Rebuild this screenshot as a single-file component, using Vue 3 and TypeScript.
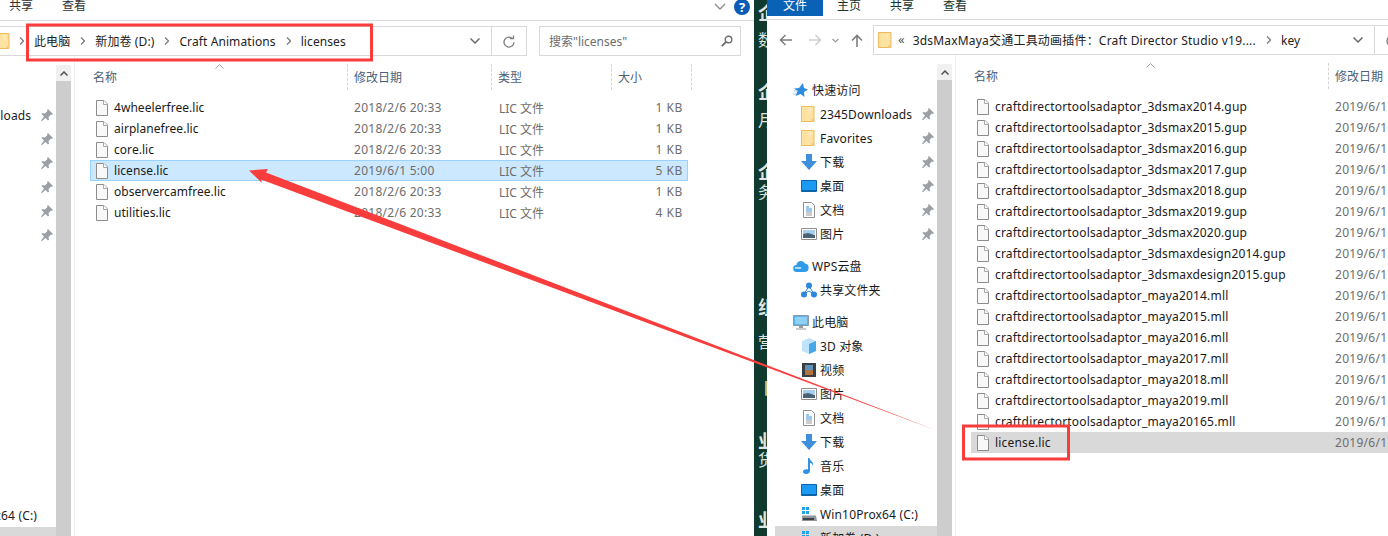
<script setup lang="ts">
type NavRow = { label: string; icon: string; level: number; pin?: boolean; active?: boolean }

const navGroups: NavRow[][] = [
  [
    { label: '快速访问', icon: 'star', level: 0 },
    { label: '2345Downloads', icon: 'folder', level: 1, pin: true },
    { label: 'Favorites', icon: 'folder', level: 1, pin: true },
    { label: '下载', icon: 'download', level: 1, pin: true },
    { label: '桌面', icon: 'desktop', level: 1, pin: true },
    { label: '文档', icon: 'docs', level: 1, pin: true },
    { label: '图片', icon: 'pictures', level: 1, pin: true },
  ],
  [
    { label: 'WPS云盘', icon: 'cloud', level: 0 },
    { label: '共享文件夹', icon: 'share', level: 1 },
  ],
  [
    { label: '此电脑', icon: 'pc', level: 0 },
    { label: '3D 对象', icon: 'cube', level: 1 },
    { label: '视频', icon: 'video', level: 1 },
    { label: '图片', icon: 'pictures', level: 1 },
    { label: '文档', icon: 'docs', level: 1 },
    { label: '下载', icon: 'download', level: 1 },
    { label: '音乐', icon: 'music', level: 1 },
    { label: '桌面', icon: 'desktop', level: 1 },
    { label: 'Win10Prox64 (C:)', icon: 'drive', level: 1 },
    { label: '新加卷 (D:)', icon: 'drive', level: 1, active: true },
  ],
]

const licenseFiles = [
  { name: '4wheelerfree.lic', date: '2018/2/6 20:33', size: '1 KB' },
  { name: 'airplanefree.lic', date: '2018/2/6 20:33', size: '1 KB' },
  { name: 'core.lic', date: '2018/2/6 20:33', size: '1 KB' },
  { name: 'license.lic', date: '2019/6/1 5:00', size: '5 KB', selected: true },
  { name: 'observercamfree.lic', date: '2018/2/6 20:33', size: '1 KB' },
  { name: 'utilities.lic', date: '2018/2/6 20:33', size: '4 KB' },
]

const prefix = 'craftdirectortoolsadaptor_'
const keyFiles = [
  '3dsmax2014.gup', '3dsmax2015.gup', '3dsmax2016.gup', '3dsmax2017.gup', '3dsmax2018.gup',
  '3dsmax2019.gup', '3dsmax2020.gup', '3dsmaxdesign2014.gup', '3dsmaxdesign2015.gup',
  'maya2014.mll', 'maya2015.mll', 'maya2016.mll', 'maya2017.mll', 'maya2018.mll', 'maya2019.mll',
  'maya20165.mll',
].map((s) => prefix + s)

const crumbs = ['此电脑', '新加卷 (D:)', 'Craft Animations', 'licenses']

// clipped characters of the page behind the windows
const stripGlyphs = [
  { ch: '企', top: 4, big: true },
  { ch: '数', top: 10, big: false },
  { ch: '企', top: 35, big: true },
  { ch: '月', top: 11, big: false },
  { ch: '企', top: 35, big: true },
  { ch: '务', top: 3, big: false },
  { ch: '组', top: 98, big: true },
  { ch: '营', top: 18, big: false },
  { ch: '丨', top: 30, big: false },
  { ch: '业', top: 36, big: true },
  { ch: '货', top: 2, big: false },
  { ch: '业', top: 43, big: true },
]
</script>

<template>
  <div class="screen">
    <svg class="defs" width="0" height="0">
      <symbol id="i-file" viewBox="0 0 12 16">
        <path d="M.5.5h7.5l3.5 3.5v11.5h-11z" fill="#f8f8f8" stroke="#8c8c8c" />
        <path d="M7.5.5v4h4" fill="#fff" stroke="#a8a8a8" />
      </symbol>
      <symbol id="i-folder" viewBox="0 0 16 16">
        <path d="M.5.5h12.500v15H.5z" fill="#fde2a2" stroke="#f0b860" />
        <path d="M10.500 13h2.500v2.500h-2.500z" fill="#f6c873" />
        <path d="M7 2h1M9 3h1M7 4h1M9 5h1M8 6h1" stroke="#fff3d4" />
      </symbol>
      <symbol id="i-star" viewBox="0 0 16 16">
        <path d="M10 1l1 5 4 1.500-4 2.500.5 5-4-3-5 2 2-5-3.500-2.500 5-.5z" fill="#2f8be0" />
        <path d="M1 9h4M0 12h3" stroke="#9ccbf2" />
      </symbol>
      <symbol id="i-download" viewBox="0 0 16 16">
        <path d="M5 0h6v7h5l-8 9-8-9h5z" fill="#3f90dc" />
      </symbol>
      <symbol id="i-desktop" viewBox="0 0 16 16">
        <path d="M.5 2.500h15v11H.5z" fill="#1c9af3" stroke="#0b63a8" />
        <path d="M1 12h14v1.500H1z" fill="#0b63a8" />
      </symbol>
      <symbol id="i-docs" viewBox="0 0 16 16">
        <path d="M2.500.5h8l3 3v12h-11z" fill="#fff" stroke="#8e8e8e" />
        <path d="M5 5h3M5 7h6M5 9h6" stroke="#3f90dc" />
        <path d="M5 11h6M5 13h6" stroke="#9a9a9a" />
      </symbol>
      <symbol id="i-pictures" viewBox="0 0 16 16">
        <path d="M.5 2.500h15v11H.5z" fill="#fff" stroke="#8e8e8e" />
        <path d="M2 4h12v4H2z" fill="#a9cdec" />
        <path d="M2 8l5-1 7 2v3H2z" fill="#4b6475" />
      </symbol>
      <symbol id="i-cloud" viewBox="0 0 16 16">
        <path d="M4 14a3.500 3.500 0 0 1-.5-7A4.500 4.500 0 0 1 12 5.500a4.300 4.300 0 0 1 0 8.500z" fill="#2f9be8" />
        <path d="M2 10h6" stroke="#a6dcf8" stroke-width="2" />
      </symbol>
      <symbol id="i-share" viewBox="0 0 16 16">
        <path d="M8 4L3 12M8 4l5 8M8 9l-5 3M8 9l5 3" stroke="#2f87dc" />
        <circle cx="8" cy="3.500" r="3" fill="#2f87dc" />
        <circle cx="3" cy="12.500" r="3" fill="#2f87dc" />
        <circle cx="13" cy="12.500" r="3" fill="#2f87dc" />
      </symbol>
      <symbol id="i-pc" viewBox="0 0 16 16">
        <path d="M.5 1.500h15v10H.5z" fill="#5cb4ee" stroke="#8e9aa5" />
        <path d="M2 3h12v7H2z" fill="#8fd0f6" />
        <path d="M6 12h4v2H6zM3 14.500h10v1H3z" fill="#9a9a9a" />
      </symbol>
      <symbol id="i-cube" viewBox="0 0 16 16">
        <path d="M8 0l7 3v10l-7 3-7-3V3z" fill="#bfe4fa" />
        <path d="M8 6l7-3v10l-7 3z" fill="#45a8e8" />
      </symbol>
      <symbol id="i-video" viewBox="0 0 16 16">
        <path d="M1 1h14v14H1z" fill="#3a3f46" />
        <path d="M4 3h8v5H4z" fill="#5d93b8" />
        <path d="M4 8h8v5H4z" fill="#b2743e" />
      </symbol>
      <symbol id="i-music" viewBox="0 0 16 16">
        <path d="M7 0h1.500c.5 3 4.500 3.500 3.500 8-.5-2-2-3-3-3.200V13c0 2-2 3-4 3s-3-1-3-2.200C2 12 4 11 7 11.500z" fill="#2e90e6" />
      </symbol>
      <symbol id="i-drive" viewBox="0 0 16 16">
        <path d="M1 1h3v3H1zM5 1h3v3H5zM1 5h3v3H1zM5 5h3v3H5z" fill="#23a0ee" />
        <path d="M1 9.500h14L16 15H1z" fill="#8f959a" />
        <path d="M2 12h11v2H2z" fill="#3f4448" />
      </symbol>
      <symbol id="i-pin" viewBox="0 0 12 12">
        <path d="M7 0l5 5-1 1-1-.5L7.500 8 8 10.500 7 11.500 4.500 9 1 12l-1-.5L3 7.500.5 5 1.500 4 4 4.500 6.500 2 6 1z" fill="#9aa0a6" />
      </symbol>
    </svg>

    <!-- left explorer window -->
    <section class="win win-left">
      <header class="ribbon">
        <span class="tab">共享</span>
        <span class="tab">查看</span>
        <svg class="ribbon-caret" width="12" height="8" viewBox="0 0 12 8"><path d="M1 1l5 5 5-5" fill="none" stroke="#8a8a8a" stroke-width="1.300" /></svg>
        <span class="help">?</span>
      </header>
      <div class="toolbar">
        <div class="address">
          <svg class="folder"><use href="#i-folder" /></svg>
          <template v-for="c in crumbs" :key="c">
            <svg class="sep" width="5" height="8" viewBox="0 0 5 8"><path d="M1 .5L4.500 4 1 7.500" fill="none" stroke="#7d7d7d" stroke-width="1.300" /></svg>
            <span class="crumb">{{ c }}</span>
          </template>
          <svg class="addr-caret" width="10" height="6" viewBox="0 0 10 6"><path d="M.5.5L5 5 9.500.5" fill="none" stroke="#6b6b6b" stroke-width="1.500" /></svg>
          <span class="refresh">
            <svg width="12" height="13" viewBox="0 0 12 13"><path d="M9.500 3.500a5 5 0 1 0 1.500 3.700M7 3.700h3.500V.5" fill="none" stroke="#7d7d7d" stroke-width="1.300" /></svg>
          </span>
        </div>
        <div class="search">
          <span>搜索"licenses"</span>
          <svg width="12" height="12" viewBox="0 0 12 12"><circle cx="7.500" cy="4.500" r="3.300" fill="none" stroke="#6e6e6e" stroke-width="1.400" /><path d="M5 7L.8 11.200" stroke="#6e6e6e" stroke-width="1.800" /></svg>
        </div>
      </div>
      <div class="body">
        <nav class="nav">
          <div class="nav-inner">
            <div v-for="(g, i) in navGroups" :key="i" class="nav-group">
              <div v-for="r in g" :key="r.label" class="nav-row" :class="['lv' + r.level, { active: r.active }]">
                <svg class="nav-icon"><use :href="'#i-' + r.icon" /></svg>
                <span class="nav-label">{{ r.label }}</span>
                <svg v-if="r.pin" class="pin"><use href="#i-pin" /></svg>
              </div>
            </div>
          </div>
        </nav>
        <div class="scroll"><span class="scroll-up"><svg width="8" height="5" viewBox="0 0 8 5"><path d="M.5 4.500L4 1l3.500 3.500" fill="none" stroke="#505050" stroke-width="1.500" /></svg></span><span class="scroll-thumb"></span></div>
        <main class="list">
          <div class="head">
            <span class="hcell hname"><svg class="sort" width="9" height="5" viewBox="0 0 9 5"><path d="M.5 4.500l4-4 4 4" fill="none" stroke="#a0a0a0" /></svg>名称</span>
            <span class="hcell hdate">修改日期</span>
            <span class="hcell htype">类型</span>
            <span class="hcell hsize">大小</span>
          </div>
          <div v-for="f in licenseFiles" :key="f.name" class="row" :class="{ selected: f.selected }">
            <span class="fname"><svg class="file"><use href="#i-file" /></svg>{{ f.name }}</span>
            <span class="meta date">{{ f.date }}</span>
            <span class="meta">LIC 文件</span>
            <span class="meta size">{{ f.size }}</span>
          </div>
        </main>
      </div>
    </section>

    <!-- strip of the page behind -->
    <aside class="strip">
      <span
        v-for="(g, i) in stripGlyphs"
        :key="i"
        class="glyph"
        :class="{ big: g.big }"
        :style="{ marginTop: g.top + 'px' }"
      >{{ g.ch }}</span>
    </aside>

    <!-- right explorer window -->
    <section class="win win-right">
      <header class="ribbon">
        <span class="tab file-tab">文件</span>
        <span class="tab">主页</span>
        <span class="tab">共享</span>
        <span class="tab">查看</span>
      </header>
      <div class="toolbar">
        <div class="navbtns">
          <svg width="14" height="12" viewBox="0 0 14 12"><path d="M13 6H2M6.500 1L1.500 6l5 5" fill="none" stroke="#7d7d7d" stroke-width="1.500" /></svg>
          <svg class="fwd" width="14" height="12" viewBox="0 0 14 12"><path d="M1 6h11M7.500 1l5 5-5 5" fill="none" stroke="#cfcfcf" stroke-width="1.500" /></svg>
          <svg class="drop" width="7" height="5" viewBox="0 0 7 5"><path d="M.5 1l3 3 3-3" fill="none" stroke="#9a9a9a" stroke-width="1.200" /></svg>
          <svg class="up" width="12" height="13" viewBox="0 0 12 13"><path d="M6 13V2M1 6.500l5-5 5 5" fill="none" stroke="#7d7d7d" stroke-width="1.600" /></svg>
        </div>
        <div class="address">
          <svg class="folder"><use href="#i-folder" /></svg>
          <span class="dbl">«</span>
          <span class="crumb long">3dsMaxMaya交通工具动画插件：Craft Director Studio v19....</span>
          <svg class="sep" width="5" height="8" viewBox="0 0 5 8"><path d="M1 .5L4.500 4 1 7.500" fill="none" stroke="#7d7d7d" stroke-width="1.300" /></svg>
          <span class="crumb">key</span>
          <svg class="addr-caret" width="10" height="6" viewBox="0 0 10 6"><path d="M.5.5L5 5 9.500.5" fill="none" stroke="#6b6b6b" stroke-width="1.500" /></svg>
          <span class="refresh">
            <svg width="12" height="13" viewBox="0 0 12 13"><path d="M9.500 3.500a5 5 0 1 0 1.500 3.700M7 3.700h3.500V.5" fill="none" stroke="#7d7d7d" stroke-width="1.300" /></svg>
          </span>
        </div>
      </div>
      <div class="body">
        <nav class="nav">
          <div class="nav-inner">
            <div v-for="(g, i) in navGroups" :key="i" class="nav-group">
              <div v-for="r in g" :key="r.label" class="nav-row" :class="['lv' + r.level, { active: r.active }]">
                <svg class="nav-icon"><use :href="'#i-' + r.icon" /></svg>
                <span class="nav-label">{{ r.label }}</span>
                <svg v-if="r.pin" class="pin"><use href="#i-pin" /></svg>
              </div>
            </div>
          </div>
        </nav>
        <div class="scroll"><span class="scroll-up"><svg width="8" height="5" viewBox="0 0 8 5"><path d="M.5 4.500L4 1l3.500 3.500" fill="none" stroke="#505050" stroke-width="1.500" /></svg></span><span class="scroll-thumb"></span></div>
        <main class="list">
          <div class="head">
            <span class="hcell hname"><svg class="sort" width="9" height="5" viewBox="0 0 9 5"><path d="M.5 4.500l4-4 4 4" fill="none" stroke="#a0a0a0" /></svg>名称</span>
            <span class="hcell hdate">修改日期</span>
          </div>
          <div v-for="f in keyFiles" :key="f" class="row">
            <span class="fname"><svg class="file"><use href="#i-file" /></svg>{{ f }}</span>
            <span class="meta date">2019/6/1</span>
          </div>
          <div class="row focused">
            <span class="fname"><svg class="file"><use href="#i-file" /></svg>license.lic</span>
            <span class="meta date">2019/6/1</span>
          </div>
        </main>
      </div>
    </section>

    <!-- red annotations drawn over the screenshot -->
    <svg class="marks" width="1388" height="536" viewBox="0 0 1388 536">
      <rect x="27.500" y="25" width="344" height="35" fill="none" stroke="#f93c3c" stroke-width="3" />
      <rect x="963.500" y="426" width="105" height="33" fill="none" stroke="#f93c3c" stroke-width="3" />
      <polygon points="249,170.500 268,169 266,172.500 938,431 261,179.500 262,183" fill="#f93c3c" />
    </svg>
  </div>
</template>

<style>
html, body { margin: 0; background: #fff; }
</style>

<style scoped>
.screen {
  position: relative;
  display: flex;
  width: 1388px;
  height: 536px;
  overflow: hidden;
  background: #fff;
  color: #1a1a1a;
  font-family: "Noto Sans", "Noto Sans CJK SC", sans-serif;
  font-size: 12px;
}
.defs { position: absolute; }
.win { display: flex; flex-direction: column; background: #fff; min-width: 0; }
.win-left { width: 754px; --ribbon: 20px; }
.win-right { width: 621px; flex: 1; --ribbon: 19px; }

.ribbon {
  display: flex;
  flex: none;
  gap: 29px;
  height: var(--ribbon);
  padding-left: 9px;
  border-bottom: 1px solid #dadbdc;
  line-height: 12px;
}
.win-right .ribbon { padding-left: 0; }
.tab { color: #333; }
.win-right .tab { color: #16352c; }
.file-tab {
  width: 56px;
  height: 16px;
  margin-right: -15px;
  background: #0a62b6;
  color: #fff !important;
  text-align: center;
  line-height: 11px;
}
.ribbon-caret { margin: 3px -21px 0 auto; }
.help {
  width: 16px;
  height: 16px;
  margin: -1px 4px 0 0;
  border-radius: 50%;
  background: #0a5bb5;
  color: #fff;
  font-weight: 700;
  font-size: 13px;
  line-height: 16px;
  text-align: center;
}

.toolbar { display: flex; flex: none; height: 35px; padding-top: 5px; box-sizing: border-box; }
.address {
  display: flex;
  flex: 1;
  align-items: center;
  min-width: 0;
  height: 30px;
  box-sizing: border-box;
  border: 1px solid #d9d9d9;
  overflow: hidden;
}
.win-left .address { margin-left: -5px; }
.win-right .address { margin-right: -22px; }
.folder { flex: none; width: 16px; height: 16px; }
.win-right .folder { margin-left: 4px; }
.sep { flex: none; margin: 0 10px; }
.win-left .folder + .sep { margin-left: 7px; }
.crumb { white-space: nowrap; color: #222; letter-spacing: .1px; }
.crumb.long { letter-spacing: .2px; }
.dbl { margin: -2px 8px 0 4px; color: #555; font-size: 13px; }
.addr-caret { flex: none; margin-left: auto; }
.refresh {
  display: flex;
  flex: none;
  align-items: center;
  justify-content: center;
  width: 34px;
  height: 100%;
  margin-left: 11px;
  border-left: 1px solid #d9d9d9;
}
.search {
  display: flex;
  flex: none;
  align-items: center;
  justify-content: space-between;
  width: 202px;
  height: 30px;
  box-sizing: border-box;
  margin: 0 13px 0 12px;
  padding: 0 7px 0 9px;
  border: 1px solid #d9d9d9;
  color: #6d6d6d;
}
.navbtns { display: flex; flex: none; align-items: center; width: 106px; height: 30px; padding-left: 12px; box-sizing: border-box; }
.fwd { margin-left: 15px; }
.drop { margin-left: 10px; }
.up { margin-left: 12px; }

.body { display: flex; flex: 1; min-height: 0; }
.nav { position: relative; display: flex; flex: none; justify-content: flex-end; overflow: hidden; }
.win-left .nav { width: 56px; }
.win-right .nav { width: 170px; }
.nav-inner { flex: none; width: 170px; padding-top: 23px; }
.nav-group { margin-bottom: 8px; }
.nav-row { display: flex; align-items: center; height: 24px; margin-left: 8px; white-space: nowrap; }
.nav-row.active { background: #d9d9d9; }
.lv0 { padding-left: 18px; }
.lv1 { padding-left: 26px; }
.nav-icon { flex: none; width: 16px; height: 16px; margin-right: 3px; }
.nav-label { letter-spacing: .15px; }
.pin { flex: none; width: 12px; height: 12px; margin-left: auto; margin-right: 3px; }

.scroll { display: flex; flex: none; flex-direction: column; width: 15px; padding-top: 9px; }
.scroll-up { display: flex; flex: none; align-items: center; justify-content: center; height: 16px; background: #f0f0f0; }
.scroll-thumb { flex: 1; background: #cdcdcd; }

.list { flex: 1; min-width: 0; margin-left: 3px; padding-left: 15px; border-left: 1px solid #f0f0f0; }
.head { display: flex; height: 26px; margin: 8px 0 7px; }
.hcell {
  position: relative;
  display: flex;
  flex: none;
  align-items: center;
  box-sizing: border-box;
  padding-left: 6px;
  border-right: 1px dashed #d5d5d5;
  color: #4c607a;
  white-space: nowrap;
}
.hname { padding-left: 3px; }
.sort { position: absolute; top: 0; left: 50%; margin-left: -4px; }
.win-left .hname { width: 258px; }
.win-left .hdate { width: 144px; }
.win-left .htype { width: 120px; }
.win-left .hsize { width: 80px; }
.win-right .hname { width: 358px; }
.win-right .hdate { border-right: 0; }

.row { display: grid; align-items: center; height: 21px; box-sizing: border-box; white-space: nowrap; border: 1px solid transparent; }
.win-left .row { grid-template-columns: 263px 145px 120px 64px; width: 598px; }
.win-right .row { grid-template-columns: 363px 1fr; }
.row.selected { background: #cce8ff; border-color: #99d1ff; }
.row.focused { background: #d9d9d9; }
.fname { display: flex; align-items: center; }
.win-left .fname { letter-spacing: .05px; }
.win-right .fname { letter-spacing: .18px; }
.file { flex: none; width: 12px; height: 16px; margin: 0 6px 0 5px; }
.meta { color: #6d6d6d; }
.date { letter-spacing: .27px; }
.size { text-align: right; letter-spacing: .6px; }

.strip {
  display: flex;
  flex: none;
  flex-direction: column;
  width: 13px;
  overflow: hidden;
  padding-left: 4px;
  box-sizing: border-box;
  background: #103a2e;
  color: #dfe6e3;
}
.glyph { flex: none; width: 16px; height: 16px; font-size: 16px; line-height: 16px; white-space: nowrap; }
.glyph.big { width: 18px; height: 18px; font-size: 18px; font-weight: 700; line-height: 18px; }

.marks { position: absolute; top: 0; left: 0; pointer-events: none; }
</style>
